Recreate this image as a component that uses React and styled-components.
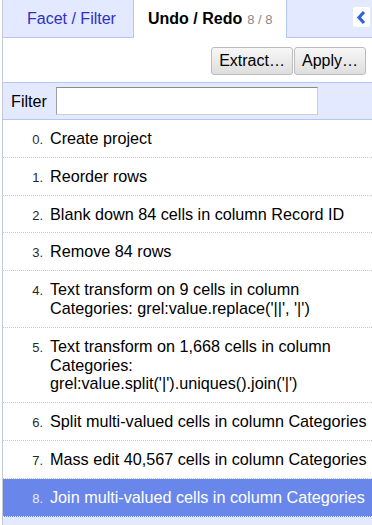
import React from "react";
import styled, { createGlobalStyle } from "styled-components";

const history = [
  { id: 0, text: "Create project" },
  { id: 1, text: "Reorder rows" },
  { id: 2, text: "Blank down 84 cells in column Record ID" },
  { id: 3, text: "Remove 84 rows" },
  {
    id: 4,
    text: "Text transform on 9 cells in column Categories: grel:value.replace('||', '|')",
  },
  {
    id: 5,
    text: "Text transform on 1,668 cells in column Categories: grel:value.split('|').uniques().join('|')",
  },
  { id: 6, text: "Split multi-valued cells in column Categories" },
  { id: 7, text: "Mass edit 40,567 cells in column Categories" },
  { id: 8, text: "Join multi-valued cells in column Categories" },
];

const current = 8;

export default function App() {
  return (
    <>
      <GlobalStyle />
      <Panel>
        <TabBar>
          <Tab>Facet / Filter</Tab>
          <Tab active>
            Undo / Redo <Count>8 / 8</Count>
          </Tab>
          <CollapseButton title="Collapse">
            <svg width="11" height="15" viewBox="0 0 11 15">
              <polyline
                points="8,2 3,7.5 8,13"
                fill="none"
                stroke="#2f63dc"
                strokeWidth="3.2"
              />
            </svg>
          </CollapseButton>
        </TabBar>

        <Toolbar>
          <Button>Extract…</Button>
          <Button>Apply…</Button>
        </Toolbar>

        <FilterBar>
          <FilterLabel>Filter</FilterLabel>
          <FilterInput type="text" />
        </FilterBar>

        <HistoryList>
          {history.map((entry) => (
            <Entry key={entry.id} selected={entry.id === current}>
              <EntryIndex>{entry.id}.</EntryIndex>
              <EntryText>{entry.text}</EntryText>
            </Entry>
          ))}
        </HistoryList>
      </Panel>
    </>
  );
}

const GlobalStyle = createGlobalStyle`
  html, body {
    margin: 0;
    height: 100%;
    background: white;
  }
  #root {
    height: 100%;
  }
  * {
    box-sizing: border-box;
  }
`;

const Panel = styled.div`
  margin-left: 2px;
  min-height: 100%;
  border-left: 1px solid #c3c9d6;
  background: #e3e9ff;
  font-family: "Liberation Sans", Arial, sans-serif;
  font-size: 16px;
  color: #000;
  display: flex;
  flex-direction: column;
`;

const TabBar = styled.div`
  display: flex;
  align-items: flex-start;
  height: 38px;
  background: #e3e9ff;
  box-shadow: inset 0 -1px 0 #b4c6f4;
`;

const Tab = styled.div`
  height: 38px;
  display: flex;
  align-items: center;
  padding: 0 0 1px;
  border-right: 1px solid #b4c6f4;
  ${({ active }) =>
    active
      ? `
    width: 153px;
    padding-left: 14px;
    background: white;
    font-weight: bold;
    color: #000;
  `
      : `
    width: 131px;
    padding-left: 24px;
    color: #2f2fc6;
  `}
`;

const Count = styled.span`
  font-weight: normal;
  font-size: 13px;
  color: #888;
  margin-left: 5px;
  padding-top: 2px;
`;

const CollapseButton = styled.div`
  margin: 7px 2px 0 auto;
  width: 17px;
  height: 20px;
  background: white;
  border-radius: 2px;
  display: flex;
  align-items: center;
  justify-content: center;
`;

const Toolbar = styled.div`
  height: 44px;
  background: white;
  display: flex;
  justify-content: flex-end;
  align-items: flex-start;
  gap: 1px;
  padding: 9px 6px 0 0;
`;

const Button = styled.button`
  height: 28px;
  margin: 0;
  padding: 0 7px;
  font-family: inherit;
  font-size: 16px;
  color: #000;
  border: 1px solid #bcbcbc;
  border-radius: 3px;
  background: linear-gradient(#f7f7f7, #dedede);
  cursor: pointer;
`;

const FilterBar = styled.div`
  height: 38px;
  display: flex;
  align-items: center;
  padding-left: 8px;
  border-top: 1px solid #b4c6f4;
  border-bottom: 1px solid #b4c6f4;
  background: #e3e9ff;
`;

const FilterLabel = styled.span`
  width: 45px;
  font-size: 16.2px;
`;

const FilterInput = styled.input`
  width: 262px;
  height: 28px;
  border: 1px solid;
  border-color: #8a8a8a #cfcfcf #cfcfcf #a0a0a0;
  background: white;
  font-family: inherit;
  font-size: 14px;
  padding: 2px 4px;
  outline: none;
`;

const HistoryList = styled.div`
  display: flex;
  flex-direction: column;
`;

const Entry = styled.div`
  display: flex;
  align-items: baseline;
  padding: 9px 0;
  font-size: 16.2px;
  line-height: 18.8px;
  border-bottom: 1px dotted ${({ selected }) => (selected ? "#e8ecff" : "#c8c8c8")};
  background: ${({ selected }) => (selected ? "#6987eb" : "white")};
  color: ${({ selected }) => (selected ? "white" : "#000")};
  cursor: pointer;
`;

const EntryIndex = styled.span`
  flex: 0 0 42px;
  text-align: right;
  font-size: 13px;
  line-height: 13px;
  padding-right: 2px;
  margin-right: 5px;
  opacity: 0.85;
`;

const EntryText = styled.span`
  flex: 1;
`;
